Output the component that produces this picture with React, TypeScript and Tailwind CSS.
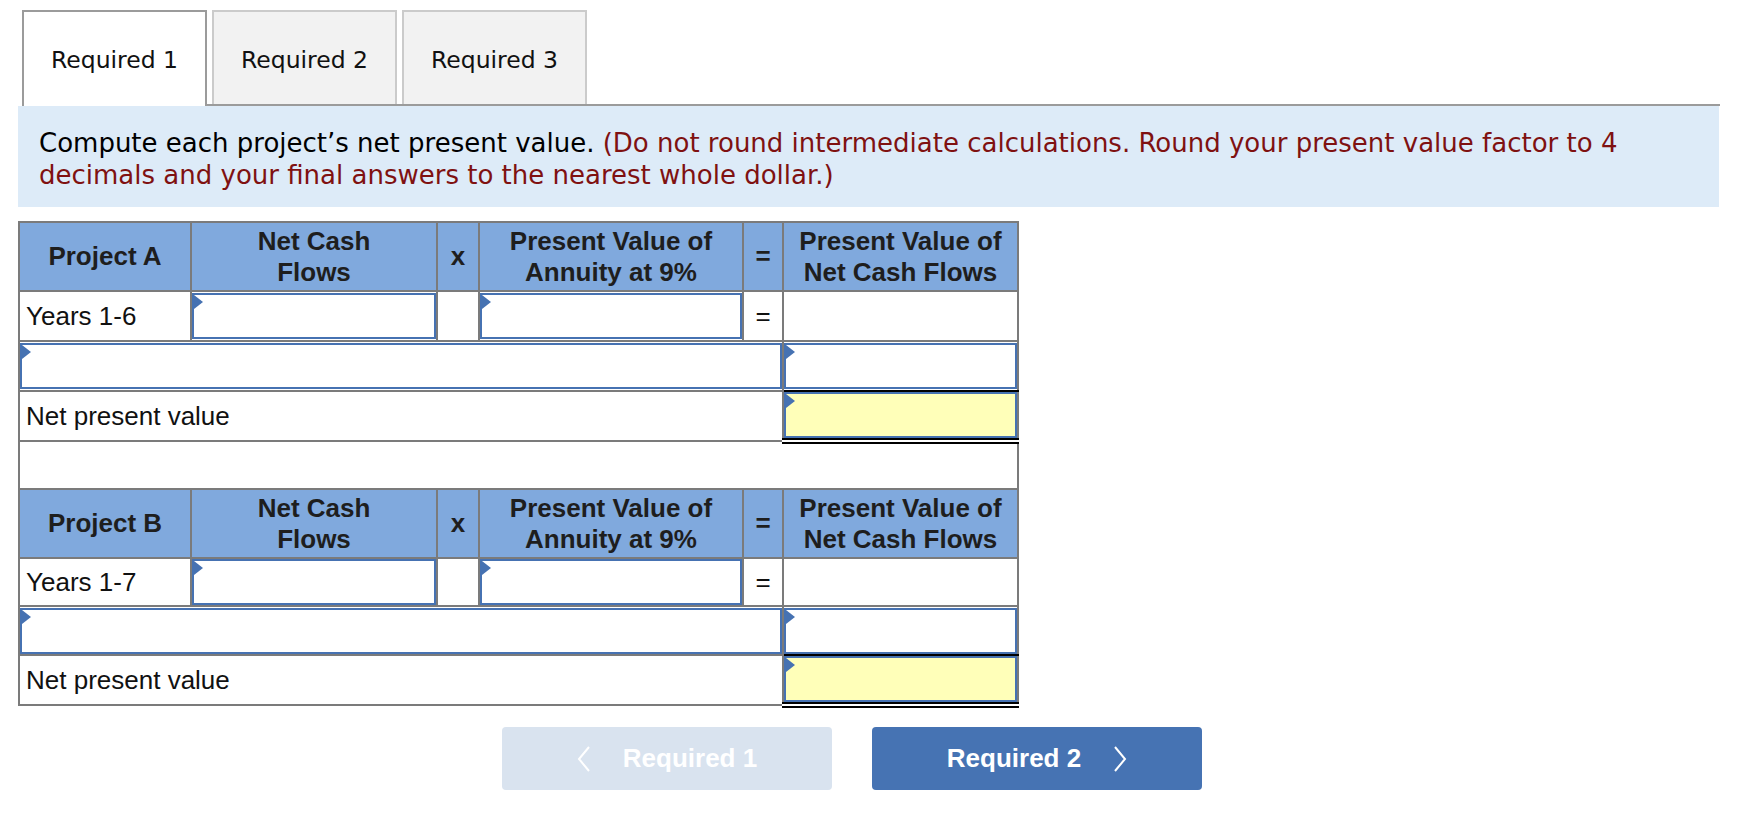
function Field({ yellow = false }: { yellow?: boolean }) {
  return (
    <div
      className={
        yellow
          ? "relative h-[46px] border-2 border-[#4672b2] bg-[#ffffb9]"
          : "relative h-[46px] border-2 border-[#4672b2] bg-white"
      }
    >
      <span className="absolute left-0 top-0 h-0 w-0 border-y-[7px] border-l-[9px] border-y-transparent border-l-[#4672b2]" />
      <input type="text" className="h-full w-full bg-transparent px-2 outline-none" />
    </div>
  );
}

function Chevron({ dir }: { dir: "left" | "right" }) {
  return (
    <svg width="14" height="26" viewBox="0 0 14 26" fill="none" stroke="currentColor" strokeWidth="2">
      {dir === "left" ? <polyline points="12,1 2,13 12,25" /> : <polyline points="2,1 12,13 2,25" />}
    </svg>
  );
}

const cell = "border-2 border-[#7b7b7b] p-0";
const head = "border-2 border-[#7b7b7b] bg-[#80a9dd] p-0 text-center align-middle font-bold leading-[31px] text-[#1e1e1e]";

function ProjectRows({ name, years, first }: { name: string; years: string; first?: boolean }) {
  return (
    <>
      <tr className="h-[69px]">
        <td className={head}>{name}</td>
        <td className={head}>
          Net Cash
          <br />
          Flows
        </td>
        <td className={head}>x</td>
        <td className={head}>
          Present Value of
          <br />
          Annuity at 9%
        </td>
        <td className={head}>=</td>
        <td className={head}>
          Present Value of
          <br />
          Net Cash Flows
        </td>
      </tr>
      <tr className={first ? "h-[50px]" : "h-[48px]"}>
        <td className={`${cell} pl-[6px]`}>{years}</td>
        <td className={cell}>
          <Field />
        </td>
        <td className={cell}></td>
        <td className={cell}>
          <Field />
        </td>
        <td className={`${cell} text-center`}>=</td>
        <td className={cell}></td>
      </tr>
      <tr className={first ? "h-[50px]" : "h-[49px]"}>
        <td colSpan={5} className={cell}>
          <Field />
        </td>
        <td className="border-2 border-[#7b7b7b] border-b-black p-0">
          <Field />
        </td>
      </tr>
      <tr className="h-[50px]">
        <td colSpan={5} className={`${cell} pl-[6px]`}>
          Net present value
        </td>
        <td className="border-2 border-[#7b7b7b] border-b-[6px] border-b-black p-0 [border-bottom-style:double]">
          <Field yellow />
        </td>
      </tr>
    </>
  );
}

export default function App() {
  return (
    <div className="min-h-screen bg-white pb-10">
      {/* Tabs */}
      <div className="ml-[22px] mt-[10px] flex w-[1698px] items-end font-['DejaVu_Sans',sans-serif] text-[23.5px] text-[#111]">
        <div className="flex h-[96px] w-[185px] items-center justify-center border-2 border-b-0 border-[#9b9b9b] bg-white pt-[3px]">
          Required 1
        </div>
        <div className="flex flex-1 gap-[5px] border-b-2 border-[#9b9b9b] pl-[5px]">
          <div className="flex h-[94px] w-[185px] items-center justify-center border-2 border-b-0 border-[#cbcbcb] bg-[#f2f2f2] pt-[5px]">
            Required 2
          </div>
          <div className="flex h-[94px] w-[185px] items-center justify-center border-2 border-b-0 border-[#cbcbcb] bg-[#f2f2f2] pt-[5px]">
            Required 3
          </div>
        </div>
      </div>

      {/* Instructions */}
      <div className="ml-[18px] w-[1701px] bg-[#ddebf8] pb-[16px] pl-[21px] pt-[21px] font-['DejaVu_Sans',sans-serif] text-[26px] leading-[32px] text-black">
        Compute each project’s net present value.{" "}
        <span className="text-[#7f1111]">
          (Do not round intermediate calculations. Round your present value factor to 4
          <br />
          decimals and your final answers to the nearest whole dollar.)
        </span>
      </div>

      {/* Table */}
      <table className="ml-[18px] mt-[14px] w-[1001px] table-fixed border-collapse font-['Liberation_Sans',Arial,sans-serif] text-[26px] text-[#111]">
        <colgroup>
          <col className="w-[172px]" />
          <col className="w-[246px]" />
          <col className="w-[42px]" />
          <col className="w-[264px]" />
          <col className="w-[40px]" />
          <col className="w-[235px]" />
        </colgroup>
        <tbody>
          <ProjectRows name="Project A" years="Years 1-6" first />
          <tr className="h-[48px]">
            <td colSpan={6} className={cell}></td>
          </tr>
          <ProjectRows name="Project B" years="Years 1-7" />
        </tbody>
      </table>

      {/* Navigation */}
      <div className="ml-[502px] mt-[19px] flex gap-[40px] font-['Liberation_Sans',Arial,sans-serif] text-[26px] font-bold text-white">
        <button className="flex h-[63px] w-[330px] items-center justify-center gap-[32px] rounded-[4px] bg-[#d9e3ef]">
          <Chevron dir="left" />
          Required 1
        </button>
        <button className="flex h-[63px] w-[330px] items-center justify-center gap-[32px] rounded-[4px] bg-[#4673b3]">
          Required 2
          <Chevron dir="right" />
        </button>
      </div>
    </div>
  );
}
